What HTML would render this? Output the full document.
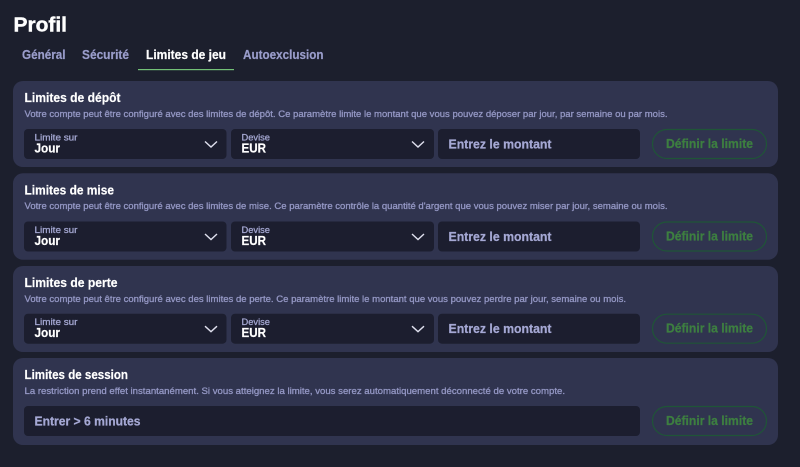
<!DOCTYPE html>
<html lang="fr"><head><meta charset="utf-8"><title>Profil</title>
<style>
html,body{margin:0;padding:0;width:800px;height:467px;overflow:hidden;background:#1c1f2d}
svg{display:block;filter:blur(.3px)}
text{font-family:"Liberation Sans","DejaVu Sans",sans-serif;font-weight:700}
.t{fill:#fff;stroke:#fff;stroke-width:.2px;font-size:13px}
.d{fill:#9497c4;font-size:9.5px;font-weight:400;stroke:#9497c4;stroke-width:.3px}
.l{fill:#a3a6d0;font-size:9.5px;font-weight:400;stroke:#a3a6d0;stroke-width:.3px}
.v{fill:#fff;stroke:#fff;stroke-width:.2px;font-size:13px}
.p{fill:#a5a8d4;stroke:#a5a8d4;stroke-width:.25px;font-size:13px}
.b{fill:#3d7f40;stroke:#3d7f40;stroke-width:.25px;font-size:12.5px}
.tab{fill:#9a9dcb;stroke:#9a9dcb;stroke-width:.2px;font-size:12.5px}
.f{fill:#1c1e2f}
.c{fill:none;stroke:#dfe0ee;stroke-width:1.4}
.o{fill:none;stroke:#1f5537;stroke-width:1.2}
</style></head><body>
<svg width="800" height="467" viewBox="0 0 800 467" xmlns="http://www.w3.org/2000/svg">
<rect x="-5" y="-5" width="810" height="477" fill="#1c1f2d"/>
<text x="13.5" y="31.5" fill="#fff" stroke="#fff" stroke-width=".4" font-size="20" textLength="53.5" lengthAdjust="spacingAndGlyphs">Profil</text>
<text class="tab" x="22" y="59" textLength="43.5" lengthAdjust="spacingAndGlyphs">Général</text>
<text class="tab" x="82" y="59" textLength="47" lengthAdjust="spacingAndGlyphs">Sécurité</text>
<text x="146" y="59" fill="#fff" stroke="#fff" stroke-width=".2" font-size="12.5" textLength="80" lengthAdjust="spacingAndGlyphs">Limites de jeu</text>
<text class="tab" x="243" y="59" textLength="80.5" lengthAdjust="spacingAndGlyphs">Autoexclusion</text>
<rect x="138" y="69" width="96" height="1.2" fill="#73c077"/>

<!-- Panel 1 -->
<rect x="13" y="81" width="765" height="86" rx="10" fill="#30344f"/>
<text class="t" x="24.5" y="102" textLength="96" lengthAdjust="spacingAndGlyphs">Limites de dépôt</text>
<text class="d" x="24.5" y="117" textLength="643" lengthAdjust="spacingAndGlyphs">Votre compte peut être configuré avec des limites de dépôt. Ce paramètre limite le montant que vous pouvez déposer par jour, par semaine ou par mois.</text>
<rect class="f" x="24" y="129" width="202.5" height="30" rx="4"/>
<text class="l" x="34.5" y="140.500" textLength="43" lengthAdjust="spacingAndGlyphs">Limite sur</text>
<text class="v" x="34.500" y="152.500" textLength="25.500" lengthAdjust="spacingAndGlyphs">Jour</text>
<path class="c" d="M205 141.500l6 5.500 6-5.500"/>
<rect class="f" x="231" y="129" width="203" height="30" rx="4"/>
<text class="l" x="241.500" y="140.500" textLength="28.500" lengthAdjust="spacingAndGlyphs">Devise</text>
<text class="v" x="241.500" y="152.500" textLength="24.500" lengthAdjust="spacingAndGlyphs">EUR</text>
<path class="c" d="M412 141.500l6 5.500 6-5.500"/>
<rect class="f" x="438" y="129" width="202" height="30" rx="4"/>
<text class="p" x="448.500" y="148.500" textLength="103" lengthAdjust="spacingAndGlyphs">Entrez le montant</text>
<rect class="o" x="652.500" y="129.500" width="114" height="29" rx="14.500"/>
<text class="b" x="666" y="148" textLength="87" lengthAdjust="spacingAndGlyphs">Définir la limite</text>

<!-- Panel 2 -->
<rect x="13" y="173.300" width="765" height="86.500" rx="10" fill="#30344f"/>
<text class="t" x="24.500" y="194.500" textLength="89.500" lengthAdjust="spacingAndGlyphs">Limites de mise</text>
<text class="d" x="24.500" y="209" textLength="643" lengthAdjust="spacingAndGlyphs">Votre compte peut être configuré avec des limites de mise. Ce paramètre contrôle la quantité d'argent que vous pouvez miser par jour, semaine ou mois.</text>
<rect class="f" x="24" y="221.500" width="202.500" height="30" rx="4"/>
<text class="l" x="34.500" y="233" textLength="43" lengthAdjust="spacingAndGlyphs">Limite sur</text>
<text class="v" x="34.500" y="245" textLength="25.500" lengthAdjust="spacingAndGlyphs">Jour</text>
<path class="c" d="M205 234l6 5.500 6-5.500"/>
<rect class="f" x="231" y="221.500" width="203" height="30" rx="4"/>
<text class="l" x="241.500" y="233" textLength="28.500" lengthAdjust="spacingAndGlyphs">Devise</text>
<text class="v" x="241.500" y="245" textLength="24.500" lengthAdjust="spacingAndGlyphs">EUR</text>
<path class="c" d="M412 234l6 5.500 6-5.500"/>
<rect class="f" x="438" y="221.500" width="202" height="30" rx="4"/>
<text class="p" x="448.500" y="241" textLength="103" lengthAdjust="spacingAndGlyphs">Entrez le montant</text>
<rect class="o" x="652.500" y="222" width="114" height="29" rx="14.500"/>
<text class="b" x="666" y="240.500" textLength="87" lengthAdjust="spacingAndGlyphs">Définir la limite</text>

<!-- Panel 3 -->
<rect x="13" y="266" width="765" height="86" rx="10" fill="#30344f"/>
<text class="t" x="24.500" y="287" textLength="93" lengthAdjust="spacingAndGlyphs">Limites de perte</text>
<text class="d" x="24.500" y="302" textLength="601.500" lengthAdjust="spacingAndGlyphs">Votre compte peut être configuré avec des limites de perte. Ce paramètre limite le montant que vous pouvez perdre par jour, semaine ou mois.</text>
<rect class="f" x="24" y="313.700" width="202.500" height="30" rx="4"/>
<text class="l" x="34.500" y="325.200" textLength="43" lengthAdjust="spacingAndGlyphs">Limite sur</text>
<text class="v" x="34.500" y="337.200" textLength="25.500" lengthAdjust="spacingAndGlyphs">Jour</text>
<path class="c" d="M205 326.200l6 5.500 6-5.500"/>
<rect class="f" x="231" y="313.700" width="203" height="30" rx="4"/>
<text class="l" x="241.500" y="325.200" textLength="28.500" lengthAdjust="spacingAndGlyphs">Devise</text>
<text class="v" x="241.500" y="337.200" textLength="24.500" lengthAdjust="spacingAndGlyphs">EUR</text>
<path class="c" d="M412 326.200l6 5.500 6-5.500"/>
<rect class="f" x="438" y="313.700" width="202" height="30" rx="4"/>
<text class="p" x="448.500" y="333.200" textLength="103" lengthAdjust="spacingAndGlyphs">Entrez le montant</text>
<rect class="o" x="652.500" y="314.200" width="114" height="29" rx="14.500"/>
<text class="b" x="666" y="332.700" textLength="87" lengthAdjust="spacingAndGlyphs">Définir la limite</text>

<!-- Panel 4 -->
<rect x="13" y="358" width="765" height="87" rx="10" fill="#30344f"/>
<text class="t" x="24.500" y="379" textLength="103.500" lengthAdjust="spacingAndGlyphs">Limites de session</text>
<text class="d" x="24.500" y="394" textLength="540.500" lengthAdjust="spacingAndGlyphs">La restriction prend effet instantanément. Si vous atteignez la limite, vous serez automatiquement déconnecté de votre compte.</text>
<rect class="f" x="24" y="406" width="616" height="30" rx="4"/>
<text class="p" x="34.500" y="425.500" textLength="106" lengthAdjust="spacingAndGlyphs">Entrer &gt; 6 minutes</text>
<rect class="o" x="652.500" y="406.500" width="114" height="29" rx="14.500"/>
<text class="b" x="666" y="425" textLength="87" lengthAdjust="spacingAndGlyphs">Définir la limite</text>
</svg>
</body></html>
